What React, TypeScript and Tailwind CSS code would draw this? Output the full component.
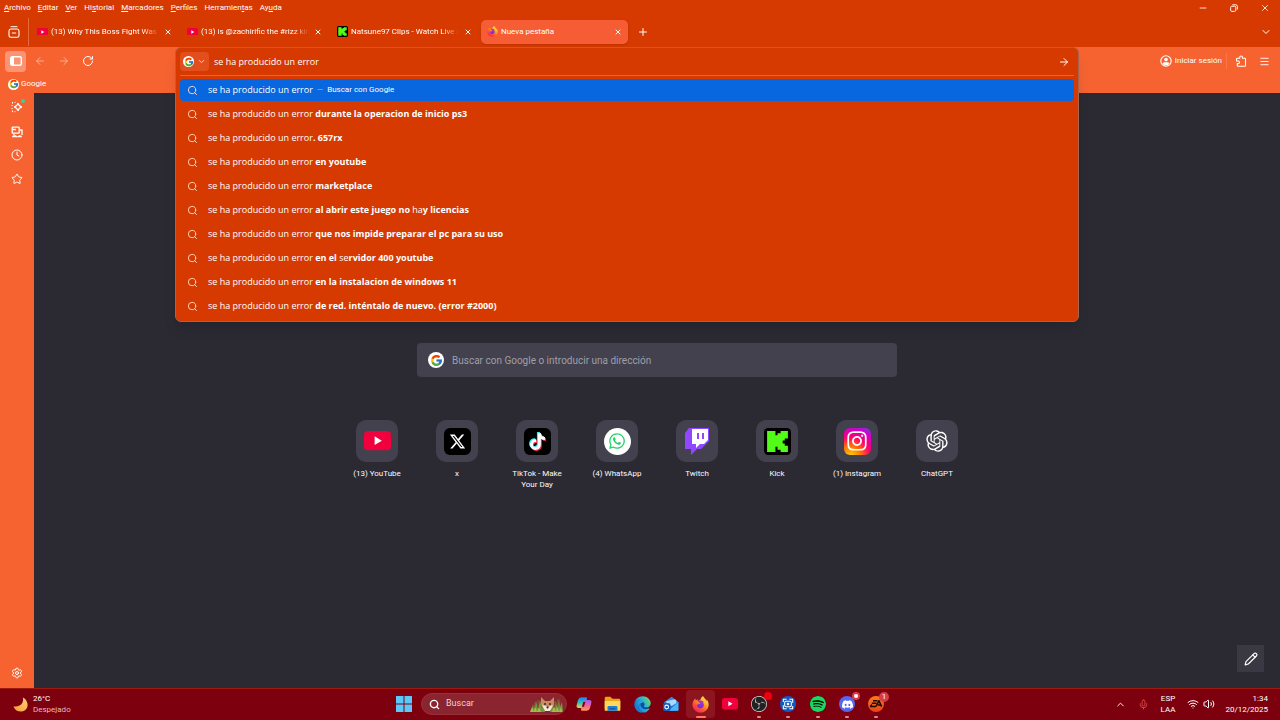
import { useState } from 'react';
import type { ReactNode } from 'react';
import {
  ArrowLeft, ArrowRight, ChevronDown, ChevronUp, Clock, Menu, Mic,
  Minus, Pencil, Plus, RotateCw, Search, Settings, Star, Volume2, Wifi, X,
} from 'lucide-react';
import { FcGoogle } from 'react-icons/fc';
import { FaEdge, FaFirefoxBrowser, FaInstagram, FaTiktok, FaWhatsapp } from 'react-icons/fa';
import { FaXTwitter } from 'react-icons/fa6';
import { RiOpenaiFill } from 'react-icons/ri';
import { SiDiscord, SiObsstudio, SiSpotify } from 'react-icons/si';

// [text, isBold]
type Piece = [string, boolean];

const QUERY = 'se ha producido un error';

const suggestions: Piece[][] = [
  [],
  [[' durante la operacion de inicio ps3', true]],
  [['. 657rx', true]],
  [[' en youtube', true]],
  [[' marketplace', true]],
  [[' al abrir este juego no ', true], ['ha', false], ['y licencias', true]],
  [[' que nos impide preparar el pc para su uso', true]],
  [[' en el ', true], ['se', false], ['rvidor 400 youtube', true]],
  [[' en la instalacion de windows 11', true]],
  [[' de red. inténtalo de nuevo. (error #2000)', true]],
];

// text before the access key, the key, text after
const menus = [
  ['', 'A', 'rchivo'],
  ['', 'E', 'ditar'],
  ['', 'V', 'er'],
  ['Hi', 's', 'torial'],
  ['', 'M', 'arcadores'],
  ['', 'P', 'erfiles'],
  ['Herramien', 't', 'as'],
  ['Ay', 'u', 'da'],
];

const YouTubeIcon = ({ className }: { className: string }) => (
  <svg viewBox="0 0 28 20" className={className}>
    <rect width="28" height="20" rx="4" fill="#f0003c" />
    <path d="M11 5.500 18.500 10 11 14.500z" fill="#fff" />
  </svg>
);

const KickIcon = ({ className }: { className: string }) => (
  <svg viewBox="0 0 26 26" className={className}>
    <rect width="26" height="26" rx="4" fill="#000" />
    <path d="M3 3h8v4h2V5h3V3h7v7h-3v2h-2v3h2v2h3v6h-7v-2h-3v-3h-2v5H3z" fill="#53fc18" />
  </svg>
);

const FirefoxIcon = ({ size }: { size: number }) => (
  <svg viewBox="0 0 24 24" width={size} height={size}>
    <defs>
      <linearGradient id="flame" x1="0.9" y1="0" x2="0.2" y2="1">
        <stop offset="0" stopColor="#fff44f" />
        <stop offset="0.35" stopColor="#ffb02e" />
        <stop offset="0.65" stopColor="#ff5a2c" />
        <stop offset="1" stopColor="#f0156b" />
      </linearGradient>
      <linearGradient id="globe" x1="0.8" y1="0" x2="0.3" y2="1">
        <stop offset="0" stopColor="#b833e1" />
        <stop offset="1" stopColor="#5b2ad0" />
      </linearGradient>
    </defs>
    <circle cx="12" cy="13" r="7.500" fill="url(#globe)" />
    <FaFirefoxBrowser size={24} fill="url(#flame)" />
  </svg>
);

const GoogleBadge = ({ className, size }: { className: string; size: number }) => (
  <span className={`flex shrink-0 items-center justify-center rounded-full bg-white ${className}`}>
    <FcGoogle size={size} />
  </span>
);

const TwitchIcon = () => (
  <svg viewBox="0 0 24 27" className="h-[27px] w-6">
    <path d="M4 0 0 5v16h6v6l6-6h4l8-8V0z" fill="#9146ff" />
    <path d="M7 1h16v11l-4 4h-4l-4 4v-4H7z" fill="#fff" />
    <path d="M12 5h2v6h-2zM17 5h2v6h-2z" fill="#9146ff" />
  </svg>
);

const TikTokIcon = () => (
  <span className="relative flex size-[27px] items-center justify-center rounded-md bg-black">
    <svg viewBox="0 0 20 20" className="size-5">
      <FaTiktok x="1" y="1" size={17} color="#25f4ee" />
      <FaTiktok x="3" y="3" size={17} color="#fe2c55" />
      <FaTiktok x="2" y="2" size={17} color="#fff" />
    </svg>
  </span>
);

const InstagramIcon = () => (
  <span className="flex size-[27px] items-center justify-center rounded-md bg-[radial-gradient(circle_at_25%_105%,#ffd600_0%,#ff7a00_28%,#ff0169_55%,#d300c5_78%,#7638fa_100%)]">
    <FaInstagram size={22} color="#fff" />
  </span>
);

const shortcuts: { label: string; icon: ReactNode }[] = [
  { label: '(13) YouTube', icon: <YouTubeIcon className="w-[27px]" /> },
  {
    label: 'x',
    icon: (
      <span className="flex size-[27px] items-center justify-center rounded-md bg-black">
        <FaXTwitter size={17} color="#fff" />
      </span>
    ),
  },
  { label: 'TikTok - Make Your Day', icon: <TikTokIcon /> },
  {
    label: '(4) WhatsApp',
    icon: (
      <span className="flex size-[27px] items-center justify-center rounded-full bg-white">
        <FaWhatsapp size={18} color="#25d366" />
      </span>
    ),
  },
  { label: 'Twitch', icon: <TwitchIcon /> },
  { label: 'Kick', icon: <KickIcon className="size-[27px]" /> },
  { label: '(1) Instagram', icon: <InstagramIcon /> },
  { label: 'ChatGPT', icon: <RiOpenaiFill size={26} color="#fff" /> },
];

const tabs: { title: string; icon: ReactNode; active?: boolean }[] = [
  { title: '(13) Why This Boss Fight Was A', icon: <YouTubeIcon className="w-[11px]" /> },
  { title: '(13) is @zachirific the #rizz king', icon: <YouTubeIcon className="w-[11px]" /> },
  { title: 'Natsune97 Clips - Watch Live o', icon: <KickIcon className="size-[11px]" /> },
  { title: 'Nueva pestaña', icon: <FirefoxIcon size={11} />, active: true },
];

const CopilotIcon = () => (
  <svg viewBox="0 0 24 24" className="size-4">
    <defs>
      <linearGradient id="cpA" x1="0" y1="0" x2="0" y2="1">
        <stop offset="0" stopColor="#1f7df0" />
        <stop offset="0.5" stopColor="#2bc4b4" />
        <stop offset="1" stopColor="#f4d13a" />
      </linearGradient>
      <linearGradient id="cpB" x1="0" y1="0" x2="0" y2="1">
        <stop offset="0" stopColor="#9a5cf5" />
        <stop offset="0.5" stopColor="#f2609e" />
        <stop offset="1" stopColor="#ff9a4a" />
      </linearGradient>
    </defs>
    <path d="M8 2h7q2 0 1.500 2l-3 11q-1 3-4 3H4q-4 0-3-4l2-8q1-4 5-4z" fill="url(#cpA)" />
    <path d="M16 22H9q-2 0-1.500-2l3-11q1-3 4-3H20q4 0 3 4l-2 8q-1 4-5 4z" fill="url(#cpB)" />
    <path d="M11 9h3l-2 7H9z" fill="#780010" />
  </svg>
);

const FolderIcon = () => (
  <svg viewBox="0 0 24 22" className="w-[17px]">
    <path d="M1 3q0-2 2-2h6l3 3h9q2 0 2 2v12H1z" fill="#e8a317" />
    <path d="M1 7h22v13q0 1-1 1H2q-1 0-1-1z" fill="#ffd75e" />
    <path d="M5 21v-5q0-2 2-2h10q2 0 2 2v5z" fill="#1f7fd4" />
    <path d="M8 17h8v2H8z" fill="#0f5aa5" />
  </svg>
);

const MailIcon = () => (
  <svg viewBox="0 0 24 24" className="size-4">
    <path d="M2 9 13 1l10 8v12q0 1-1 1H3q-1 0-1-1z" fill="#2f8fe8" />
    <path d="M5 8 18 5l2 2v9H5z" fill="#a8dcff" />
    <path d="m2 9 11 6 10-6v12q0 1-1 1H3q-1 0-1-1z" fill="#1b74dc" />
    <path d="M23 9 8 22h14q1 0 1-1z" fill="#4db5f7" />
    <rect x="0" y="11" width="11" height="11" rx="2" fill="#1058b8" />
    <circle cx="5.500" cy="16.500" r="2.800" fill="none" stroke="#fff" strokeWidth="1.600" />
  </svg>
);

const EdgeIcon = () => (
  <svg viewBox="0 0 24 24" className="size-[17px]">
    <defs>
      <linearGradient id="edge" x1="0" y1="0.7" x2="1" y2="0.2">
        <stop offset="0" stopColor="#0f6fd0" />
        <stop offset="0.5" stopColor="#2aa9e0" />
        <stop offset="1" stopColor="#5fe06a" />
      </linearGradient>
    </defs>
    <circle cx="12" cy="12" r="10.500" fill="#0d4f9e" />
    <FaEdge size={24} fill="url(#edge)" />
  </svg>
);

const CaptureIcon = () => (
  <svg viewBox="0 0 24 24" className="size-4">
    <circle cx="12" cy="12" r="12" fill="#1259c3" />
    <path d="M5 9V5h5M14 5h5v5M19 15v4h-5M10 19H5v-5" fill="none" stroke="#fff" strokeWidth="1.600" />
    <rect x="7" y="8" width="10" height="8" rx="2" fill="none" stroke="#fff" strokeWidth="1.600" />
    <circle cx="12" cy="12" r="2" fill="#fff" />
  </svg>
);

const WindowsIcon = () => (
  <svg viewBox="0 0 16 16" className="size-4">
    <path d="M0 0h7.500v7.500H0zM8.500 0H16v7.500H8.500zM0 8.500h7.500V16H0zM8.500 8.500H16V16H8.500z" fill="#5cc8fa" />
  </svg>
);

const RecentTabsIcon = () => (
  <svg viewBox="0 0 12 12" className="size-3" fill="none" stroke="currentColor" strokeLinecap="round">
    <path d="M3 .7h6" />
    <path d="M1 5q0-2 1.800-2h6.400Q11 3 11 5v4.500q0 1.800-1.800 1.800H2.800Q1 11.300 1 9.500z" strokeWidth="1.100" />
    <path d="M4.300 7h3.400" strokeWidth="1.200" />
  </svg>
);

const RestoreIcon = () => (
  <svg viewBox="0 0 10 10" className="size-2" fill="none" stroke="currentColor" strokeWidth="1.200">
    <rect x="0.800" y="2.800" width="6.400" height="6.400" rx="1.400" />
    <path d="M3 1h4.200Q9.200 1 9.200 3v4" />
  </svg>
);

const PuzzleIcon = () => (
  <svg viewBox="0 0 12 12" className="size-3" fill="none" stroke="currentColor" strokeWidth="1.100" strokeLinejoin="round">
    <path d="M2.300 3.300h2.400V2.400a1.400 1.400 0 0 1 2.800 0v.9h2.200q.8 0 .8.800v6.400q0 .8-.8.800H3.100q-.8 0-.8-.8V8.600h.9a1.200 1.200 0 0 0 0-2.600h-1.700V4.100q0-.8.800-.8z" />
  </svg>
);

const AccountIcon = () => (
  <svg viewBox="0 0 12 12" className="size-3">
    <circle cx="6" cy="6" r="5.200" fill="none" stroke="currentColor" strokeWidth="1.100" />
    <circle cx="6" cy="4.600" r="1.800" fill="currentColor" />
    <path d="M2.600 8.800q0-1.600 1.600-1.600h3.600q1.600 0 1.600 1.600Q8.200 10.400 6 10.400T2.600 8.800z" fill="currentColor" />
  </svg>
);

// fox peeking out of the grass in the taskbar search box
const FoxArt = () => (
  <svg viewBox="0 0 34 16" className="h-4 w-[34px]">
    <path d="M1 16 3 8l1 5 2-8 2 8 2-9 2 8 2-6 1 10zM20 16l2-9 2 6 2-8 1 7 2-9 1 8 2-5 1 10z" fill="#6f9a3e" />
    <path d="m11 1 4 4h5l4-4v8l-3 5h-6l-4-5z" fill="#c98a62" />
    <path d="m12 9 4 1 2 2 2-2 3-1-3 6h-5z" fill="#f3e6da" />
    <circle cx="15" cy="8" r="0.900" fill="#222" />
    <circle cx="20" cy="8" r="0.900" fill="#222" />
    <circle cx="17.500" cy="11.500" r="1" fill="#222" />
    <path d="m0 16 2-5 2 5 1-7 2 7 2-5 2 5h11l2-6 2 6 1-7 2 7 2-5 1 5z" fill="#a9b94f" />
    <path d="M8 4v8M5 6v6M28 3v9M25 5v7" stroke="#8a5a34" strokeWidth="1" />
  </svg>
);

const MoonIcon = () => (
  <svg viewBox="0 0 16 16" className="size-[15px]">
    <defs>
      <linearGradient id="moon" x1="1" y1="0" x2="0" y2="1">
        <stop offset="0" stopColor="#ffd36b" />
        <stop offset="1" stopColor="#f59a3c" />
      </linearGradient>
    </defs>
    <path d="M10.500 0.500c1.500 6-3 10.500-10 9.500C2 14 5.500 15.800 9 15.500c4.500-.5 7-4 6.500-8-.4-3.300-2.300-5.800-5-7z" fill="url(#moon)" />
  </svg>
);

const apps: { name: string; icon: ReactNode; state?: 'open' | 'focused'; badge?: string }[] = [
  { name: 'Copilot', icon: <CopilotIcon /> },
  { name: 'Explorador de archivos', icon: <FolderIcon /> },
  { name: 'Edge', icon: <EdgeIcon /> },
  { name: 'Outlook', icon: <MailIcon /> },
  { name: 'Firefox', icon: <FirefoxIcon size={17} />, state: 'focused' },
  { name: 'YouTube', icon: <YouTubeIcon className="w-4" /> },
  {
    name: 'OBS Studio',
    icon: (
      <span className="rounded-full bg-[#222]">
        <SiObsstudio size={16} color="#d8d0d0" />
      </span>
    ),
    state: 'open',
    badge: 'rec',
  },
  { name: 'Captura', icon: <CaptureIcon />, state: 'open' },
  {
    name: 'Spotify',
    icon: (
      <span className="rounded-full bg-black">
        <SiSpotify size={16} color="#1ed760" />
      </span>
    ),
    state: 'open',
  },
  {
    name: 'Discord',
    icon: (
      <span className="flex size-4 items-center justify-center rounded-full bg-[#5865f2]">
        <SiDiscord size={11} color="#fff" />
      </span>
    ),
    state: 'open',
    badge: 'dot',
  },
  {
    name: 'EA',
    icon: (
      <span className="flex size-4 items-center justify-center rounded-full bg-linear-to-b from-[#ff7a1c] to-[#e8401c]">
        <svg viewBox="0 0 16 10" className="w-3" fill="none" stroke="#1a0a05" strokeWidth="2">
          <path d="M4 1h6M2.500 4.200h6M8 8.500H.8L2.500 6M8 8.500 12 1l3.500 7.800M10.500 6.800h4" />
        </svg>
      </span>
    ),
    state: 'open',
    badge: '1',
  },
];

const WindowControls = () => (
  <div className="ml-auto flex items-center">
    <button aria-label="Minimizar" className="flex w-[31px] justify-center"><Minus size={10} strokeWidth={2} /></button>
    <button aria-label="Restaurar" className="flex w-[31px] justify-center"><RestoreIcon /></button>
    <button aria-label="Cerrar" className="flex w-[31px] justify-center"><X size={10} strokeWidth={2} /></button>
  </div>
);

const TabStrip = () => (
  <div className="flex h-[31px] items-center text-[8px]">
    <button aria-label="Pestañas recientes" className="flex w-7 justify-center"><RecentTabsIcon /></button>
    <div className="h-7 w-px bg-[#e8683a]" />
    <div className="ml-0.5 flex gap-[3px]">
      {tabs.map((tab) => (
        <div
          key={tab.title}
          className={`flex h-6 w-[147px] items-center gap-[3px] rounded-[5px] pr-1 pl-[5px] ${tab.active ? 'bg-[#f65d35] shadow-sm' : ''}`}
        >
          <span className="flex w-3 shrink-0 justify-center">{tab.icon}</span>
          <span className={`min-w-0 flex-1 whitespace-nowrap ${tab.active ? '' : 'mask-r-from-85%'}`}>{tab.title}</span>
          <button aria-label="Cerrar pestaña" className="flex w-3 shrink-0 justify-center"><X size={8} strokeWidth={3} /></button>
        </div>
      ))}
    </div>
    <button aria-label="Nueva pestaña" className="ml-2 flex w-3.5 justify-center"><Plus size={12} strokeWidth={2} /></button>
    <button aria-label="Listar pestañas" className="mr-2 ml-auto"><ChevronDown size={12} strokeWidth={2} /></button>
  </div>
);

const UrlBar = ({ value, onChange }: { value: string; onChange: (v: string) => void }) => (
  <div className="absolute inset-x-0 top-0 z-10 rounded-md border border-[#a8644e] bg-[#d73a00] font-['Open_Sans',sans-serif] shadow-lg">
    <div className="mx-1 flex h-7 items-center border-b border-[#f0602c]">
      <button aria-label="Motor de búsqueda" className="flex h-[19px] w-[29px] items-center justify-between rounded-sm bg-[#e24e1c] px-[3px]">
        <GoogleBadge className="size-[11px]" size={10} />
        <ChevronDown size={9} strokeWidth={2} />
      </button>
      <input
        aria-label="Dirección"
        value={value}
        onChange={(e) => onChange(e.target.value)}
        className="ml-[5px] h-full flex-1 bg-transparent text-[9px] outline-none"
      />
      <button aria-label="Ir" className="mr-1"><ArrowRight size={12} strokeWidth={2} /></button>
    </div>
    <ul className="flex flex-col gap-0.5 px-1 pt-[3px] pb-1 text-[9px]">
      {suggestions.map((pieces, i) => (
        <li key={i}>
          <button className={`flex h-[22px] w-full items-center rounded-sm pl-[7px] text-left ${i === 0 ? 'bg-[#0866de]' : ''}`}>
            <Search size={11} strokeWidth={2} className="mr-[10px] shrink-0 text-[#ffd9c8]" />
            <span className="whitespace-pre">
              {QUERY}
              {pieces.map(([text, bold], j) => (
                <span key={j} className={bold ? 'font-bold' : ''}>{text}</span>
              ))}
            </span>
            {i === 0 && (
              <span className="ml-1 font-[Roboto,sans-serif] text-[8px]">
                <span className="mr-1 opacity-60">—</span>Buscar con Google
              </span>
            )}
          </button>
        </li>
      ))}
    </ul>
  </div>
);

const Toolbar = () => {
  const [query, setQuery] = useState(QUERY);

  return (
    <div className="flex h-7 items-center">
      <div className="flex w-[175px] shrink-0 items-center pl-[5px]">
        <button aria-label="Barra lateral" className="flex size-[21px] items-center justify-center rounded-sm bg-[#fb9473]">
          <svg viewBox="0 0 12 10" className="w-3">
            <rect x="0.700" y="0.700" width="10.600" height="8.600" rx="1.500" fill="none" stroke="currentColor" strokeWidth="1.400" />
            <path d="M1 1h3v8H1z" fill="currentColor" />
          </svg>
        </button>
        <button aria-label="Atrás" className="ml-2 flex w-3 text-[#ffb08f]"><ArrowLeft size={12} /></button>
        <button aria-label="Adelante" className="ml-3 flex w-3 text-[#ffb08f]"><ArrowRight size={12} /></button>
        <button aria-label="Recargar" className="ml-3 flex w-3"><RotateCw size={12} strokeWidth={2} /></button>
      </div>
      <div className="relative flex-1 self-stretch">
        <UrlBar value={query} onChange={setQuery} />
      </div>
      <div className="flex w-[201px] shrink-0 items-center justify-end pr-[10px]">
        <button className="flex items-center gap-[3px] text-[8px]">
          <AccountIcon />
          Iniciar sesión
        </button>
        <span className="ml-1 h-4 w-px bg-[#f8784a]" />
        <button aria-label="Extensiones" className="ml-2"><PuzzleIcon /></button>
        <button aria-label="Menú" className="ml-3"><Menu size={11} strokeWidth={2} /></button>
      </div>
    </div>
  );
};

const Sidebar = () => (
  <aside className="flex w-[34px] shrink-0 flex-col items-center bg-[#f66331] pt-2 pb-[9px]">
    <button aria-label="Chatbot de IA" className="relative mb-[13px]">
      <svg viewBox="0 0 12 12" className="size-3" fill="none" stroke="currentColor">
        <path d="M7 2q.7 3.300 4 4-3.300.7-4 4-.7-3.300-4-4 3.300-.7 4-4z" strokeWidth="1.200" />
        <path d="M1.500 1v1.600M1.500 9.500v1.600M.5 4.500h1.200M.5 7.500h1.200M4 .8v1M4 10.200v1" />
      </svg>
      <span className="absolute -top-0.5 -right-0.5 size-1 rounded-full bg-[#3ccf9c]" />
    </button>
    <button aria-label="Pestañas de otros dispositivos" className="mb-[11px]">
      <svg viewBox="0 0 12 12" className="size-3" fill="none" stroke="currentColor" strokeWidth="1.300">
        <rect x="1.200" y="1.200" width="7" height="6" rx="0.500" />
        <path d="M2 3.500h3M9 4h2v5M3 8v1" />
        <path d="M1 11.300q0-2 2-2h2q.5 1 1.500 1t1.500-1h1q2 0 2 2z" fill="currentColor" stroke="none" />
      </svg>
    </button>
    <button aria-label="Historial" className="mb-3"><Clock size={12} strokeWidth={2} /></button>
    <button aria-label="Marcadores"><Star size={12} strokeWidth={2} /></button>
    <button aria-label="Personalizar barra lateral" className="mt-auto"><Settings size={12} strokeWidth={2} /></button>
  </aside>
);

const NewTab = () => (
  <main className="relative flex flex-1 flex-col items-center bg-[#2b2a33] pt-[250px]">
    <label className="flex h-[34px] w-[480px] items-center gap-2 rounded-sm bg-[#42414d] px-[11px]">
      <GoogleBadge className="size-4" size={13} />
      <input
        aria-label="Buscar"
        placeholder="Buscar con Google o introducir una dirección"
        className="h-full flex-1 bg-transparent text-[10px] outline-none placeholder:text-[#a09fa8]"
      />
    </label>
    <nav className="mt-[43px] flex">
      {shortcuts.map((s) => (
        <a key={s.label} href="#" className="flex w-20 flex-col items-center px-2">
          <span className="flex size-[42px] items-center justify-center rounded-[10px] bg-[#42414d]">{s.icon}</span>
          <span className="mt-1.5 text-center text-[8px] leading-[11px] text-[#fbfbfe]">{s.label}</span>
        </a>
      ))}
    </nav>
    <button aria-label="Personalizar" className="absolute right-4 bottom-4 flex size-[27px] items-center justify-center bg-[#3a3943]">
      <Pencil size={14} strokeWidth={2} />
    </button>
  </main>
);

const Taskbar = () => (
  <footer className="grid h-8 shrink-0 grid-cols-[1fr_auto_1fr] items-center bg-[#7d000e] text-[8px] shadow-[inset_0_1px_0_#9c1a10]">
    <button className="flex items-center gap-[5px] pl-[13px] text-left">
      <MoonIcon />
      <span className="leading-[11px]">
        <span className="block">26°C</span>
        <span className="block text-[#e5b9bb]">Despejado</span>
      </span>
    </button>
    <div className="flex items-center">
      <button aria-label="Inicio" className="flex w-[30px] justify-center"><WindowsIcon /></button>
      <label className="mx-0.5 flex h-[22px] w-[146px] items-center rounded-full border border-[#963038] bg-[#8a2530] pr-0.5 pl-[7px]">
        <Search size={11} strokeWidth={3} />
        <input aria-label="Buscar en Windows" placeholder="Buscar" className="ml-1.5 w-0 flex-1 bg-transparent text-[9px] outline-none placeholder:text-[#f0d0d2]" />
        <FoxArt />
      </label>
      <div className="flex w-[322px]">
        {apps.map((app) => (
          <button
            key={app.name}
            aria-label={app.name}
            className={`relative flex h-7 flex-1 items-center justify-center rounded-sm ${app.state === 'focused' ? 'bg-[#8b1620]' : ''}`}
          >
            {app.icon}
            {app.state === 'focused' && <span className="absolute bottom-0 h-0.5 w-[10px] rounded-full bg-[#ff7d5c]" />}
            {app.state === 'open' && <span className="absolute bottom-0 h-0.5 w-1 rounded-full bg-[#e0888c]" />}
            {app.badge === 'rec' && <span className="absolute top-0.5 right-0.5 size-2 rounded-full bg-[#f0000c]" />}
            {app.badge === 'dot' && (
              <span className="absolute top-0.5 right-0.5 flex size-2 items-center justify-center rounded-full bg-[#d83b4a]">
                <span className="size-1 rounded-full bg-white" />
              </span>
            )}
            {app.badge === '1' && (
              <span className="absolute top-0.5 right-0.5 flex size-[10px] items-center justify-center rounded-full bg-[#d83b4a] text-[8px] leading-none">1</span>
            )}
          </button>
        ))}
      </div>
    </div>
    <div className="flex items-center justify-end pr-3">
      <button aria-label="Iconos ocultos"><ChevronUp size={11} strokeWidth={2} /></button>
      <button aria-label="Micrófono" className="ml-3 text-[#e0484c]"><Mic size={11} strokeWidth={2} /></button>
      <button className="ml-3 text-center leading-[11px]">ESP<br />LAA</button>
      <button aria-label="Red y volumen" className="ml-3 flex items-center gap-1">
        <Wifi size={12} strokeWidth={2} />
        <Volume2 size={12} strokeWidth={2} />
      </button>
      <button className="ml-[10px] text-right leading-[11px]">1:34<br />20/12/2025</button>
    </div>
  </footer>
);

export default function App() {
  return (
    <div className="flex min-h-screen flex-col bg-[#2b2a33] font-[Roboto,sans-serif] text-white">
      <header className="bg-[#d73a00]">
        <div className="flex h-4 items-center pl-1 text-[8px]">
          <nav className="flex gap-[7px]">
            {menus.map(([before, key, after]) => (
              <button key={before + key + after}>{before}<u>{key}</u>{after}</button>
            ))}
          </nav>
          <WindowControls />
        </div>
        <TabStrip />
      </header>
      <div className="bg-[#f66331]">
        <Toolbar />
        <div className="flex h-[18px] items-center pl-2 text-[8px]">
          <a href="#" className="flex items-center gap-0.5">
            <GoogleBadge className="size-[11px]" size={10} />
            Google
          </a>
        </div>
      </div>
      <div className="flex flex-1">
        <Sidebar />
        <NewTab />
      </div>
      <Taskbar />
    </div>
  );
}
